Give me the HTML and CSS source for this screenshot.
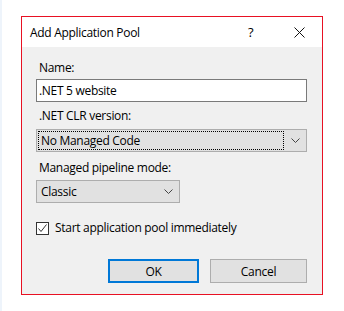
FILE: index.html
```html
<!DOCTYPE html>
<html lang="en">
<head>
    <meta charset="UTF-8">
    <title>Add Application Pool</title>
    <link rel="stylesheet" href="styles.css">
</head>
<body>
    <div class="dialog">
        <div class="titlebar">
            <span class="title">Add Application Pool</span>
            <span class="help">?</span>
            <span class="close">
                <svg width="11" height="11" viewBox="0 0 11 11">
                    <path d="M0.5 0.5 L10.5 10.5 M10.5 0.5 L0.5 10.5" stroke="#111" stroke-width="1" fill="none"/>
                </svg>
            </span>
        </div>

        <div class="content">
            <div class="label label-name">Name:</div>
            <div class="textbox">.NET 5 website</div>

            <div class="label label-clr">.NET CLR version:</div>
            <div class="combo combo-wide">
                <span class="combo-text focused">No Managed Code</span>
                <span class="chevron">
                    <svg width="9" height="5" viewBox="0 0 9 5">
                        <path d="M0.5 0.5 L4.5 4.5 L8.5 0.5" stroke="#444" stroke-width="1" fill="none"/>
                    </svg>
                </span>
            </div>

            <div class="label label-mode">Managed pipeline mode:</div>
            <div class="combo combo-small">
                <span class="combo-text">Classic</span>
                <span class="chevron">
                    <svg width="9" height="5" viewBox="0 0 9 5">
                        <path d="M0.5 0.5 L4.5 4.5 L8.5 0.5" stroke="#444" stroke-width="1" fill="none"/>
                    </svg>
                </span>
            </div>

            <div class="check-row">
                <span class="checkbox">
                    <svg width="11" height="11" viewBox="0 0 11 11">
                        <path d="M1.5 5.5 L4 8.5 L9.5 1.5" stroke="#333" stroke-width="1" fill="none"/>
                    </svg>
                </span>
                <span class="check-label">Start application pool immediately</span>
            </div>

            <div class="buttons">
                <div class="btn btn-ok">OK</div>
                <div class="btn btn-cancel">Cancel</div>
            </div>
        </div>
    </div>
</body>
</html>
```

FILE: styles.css
```css
body {
    margin: 0;
    background-color: #fff;
    border-left: 2px solid #eef4fb;
    height: 311px;
    box-sizing: border-box;
    font-family: "Open Sans", "Noto Sans", sans-serif;
    font-size: 12px;
    letter-spacing: -0.3px;
    color: #000;
    padding-top: 16px;
    padding-left: 19px;
}

.dialog {
    width: 302px;
    height: 279px;
    box-sizing: border-box;
    border: 1px solid #e81123;
    background-color: #f0f0f0;
}

.titlebar {
    height: 30px;
    background-color: #fff;
    display: flex;
    align-items: center;
    padding-left: 8px;
}

.title {
    flex: 1;
    line-height: 16px;
    padding-top: 1px;
}

.help {
    width: 12px;
    margin-right: 34px;
    font-size: 13px;
}

.close {
    width: 11px;
    height: 11px;
    margin-right: 17px;
    display: flex;
}

.content {
    padding: 13px 15px 0 14px;
}

.label {
    line-height: 16px;
    padding-left: 3px;
}

.label-clr {
    margin-top: 6px;
}

.label-mode {
    margin-top: 8px;
}

.textbox {
    margin-top: 3px;
    height: 23px;
    box-sizing: border-box;
    border: 1px solid #7a7a7a;
    background-color: #fff;
    line-height: 21px;
    padding-left: 2px;
}

.combo {
    margin-top: 5px;
    height: 23px;
    box-sizing: border-box;
    border: 1px solid #adadad;
    background-color: #e1e1e1;
    display: flex;
    align-items: center;
    padding: 0 2px;
}

.combo-small {
    width: 144px;
    margin-top: 4px;
}

.combo-text {
    flex: 1;
    line-height: 17px;
    padding-left: 2px;
}

.combo-text.focused {
    outline: 1px dotted #000;
    outline-offset: 0;
    margin-right: 8px;
}

.chevron {
    display: flex;
    margin-right: 4px;
}

.check-row {
    margin-top: 17px;
    display: flex;
    align-items: center;
}

.checkbox {
    width: 13px;
    height: 13px;
    box-sizing: border-box;
    border: 1px solid #333;
    background-color: #fff;
    display: flex;
    align-items: center;
    justify-content: center;
}

.check-label {
    margin-left: 6px;
    line-height: 16px;
}

.buttons {
    margin-top: 23px;
    display: flex;
    justify-content: flex-end;
    gap: 11px;
}

.btn {
    height: 24px;
    box-sizing: border-box;
    background-color: #e1e1e1;
    border: 1px solid #adadad;
    display: flex;
    align-items: center;
    justify-content: center;
}

.btn-ok {
    width: 91px;
    border: 2px solid #0078d7;
}

.btn-cancel {
    width: 97px;
}
```
